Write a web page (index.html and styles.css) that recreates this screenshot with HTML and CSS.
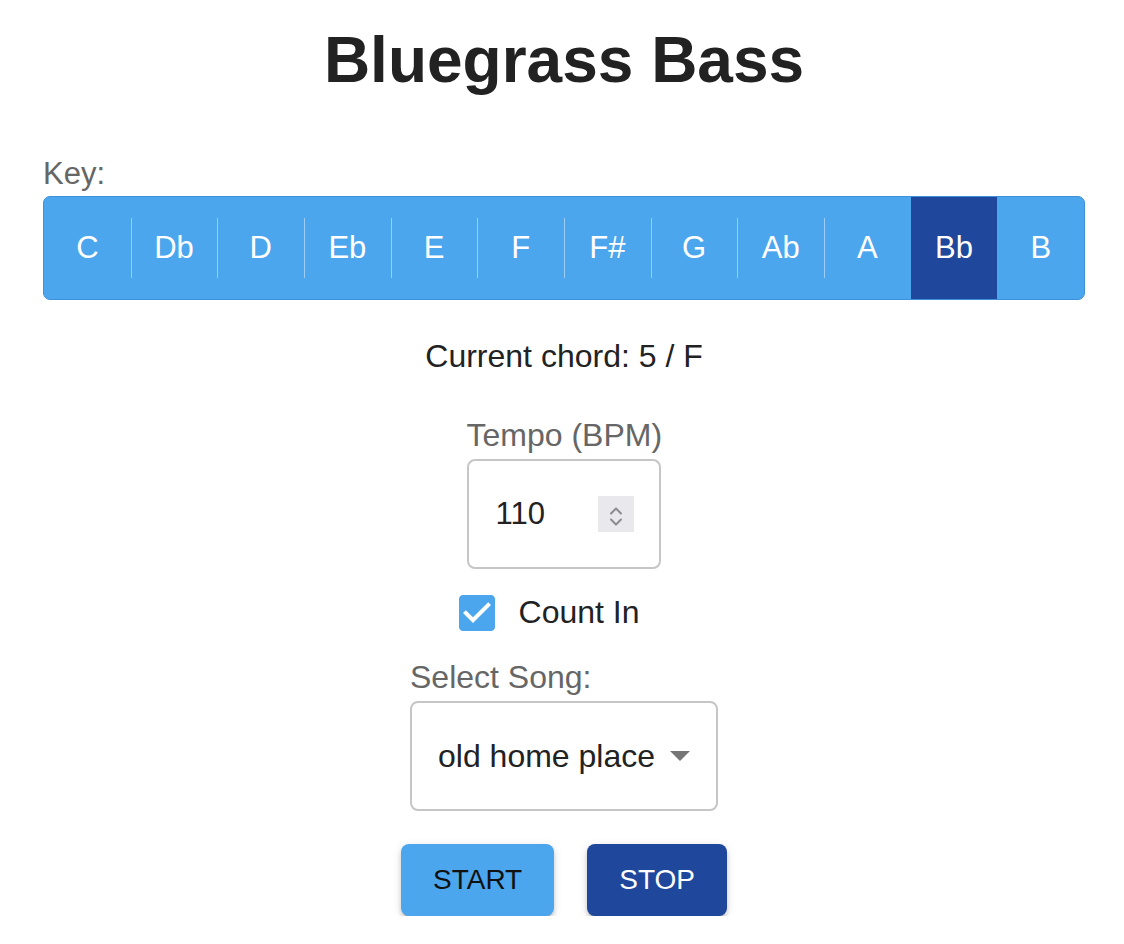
FILE: index.html
```html
<!DOCTYPE html>
<html lang="en">
<head>
<meta charset="utf-8">
<title>Bluegrass Bass</title>
<link rel="stylesheet" href="styles.css">
</head>
<body>
<main class="app">
  <h1 class="title">Bluegrass Bass</h1>

  <section class="key-section">
    <div class="field-label">Key:</div>
    <div class="key-group">
      <button class="key-btn">C</button>
      <button class="key-btn">Db</button>
      <button class="key-btn">D</button>
      <button class="key-btn">Eb</button>
      <button class="key-btn">E</button>
      <button class="key-btn">F</button>
      <button class="key-btn">F#</button>
      <button class="key-btn">G</button>
      <button class="key-btn">Ab</button>
      <button class="key-btn">A</button>
      <button class="key-btn selected">Bb</button>
      <button class="key-btn">B</button>
    </div>
  </section>

  <p class="chord">Current chord: 5 / F</p>

  <div class="tempo">
    <div class="field-label">Tempo (BPM)</div>
    <div class="num-box">
      <span class="num-value">110</span>
      <span class="spinner">
        <svg width="36" height="36" viewBox="0 0 36 36">
          <path d="M13 17.5 L18 12.5 L23 17.5" fill="none" stroke="#8b8b92" stroke-width="2" stroke-linecap="round" stroke-linejoin="round"/>
          <path d="M13 28 L18 33 L23 28" fill="none" stroke="#8b8b92" stroke-width="2" stroke-linecap="round" stroke-linejoin="round" transform="translate(0,-4.5)"/>
        </svg>
      </span>
    </div>
  </div>

  <label class="count-in">
    <span class="checkbox">
      <svg width="36" height="36" viewBox="3 3 18 18">
        <path fill="#4ba6ed" d="M19 3H5c-1.11 0-2 .9-2 2v14c0 1.1.89 2 2 2h14c1.11 0 2-.9 2-2V5c0-1.1-.89-2-2-2zm-9 14l-5-5 1.41-1.41L10 14.17l7.59-7.59L19 8l-9 9z"/>
      </svg>
    </span>
    <span class="count-text">Count In</span>
  </label>

  <div class="song">
    <div class="field-label">Select Song:</div>
    <div class="select-box">
      <span class="select-value">old home place</span>
      <svg class="select-arrow" width="20" height="10" viewBox="0 0 20 10">
        <path d="M0 0 L10 10 L20 0 Z" fill="#757575"/>
      </svg>
    </div>
  </div>

  <div class="actions">
    <button class="action start">START</button>
    <button class="action stop">STOP</button>
  </div>
</main>
</body>
</html>
```

FILE: styles.css
```css
* {
  box-sizing: border-box;
}

body {
  margin: 0;
  background: #ffffff;
  font-family: "Liberation Sans", Arial, Helvetica, sans-serif;
  color: #222222;
}

.app {
  display: flex;
  flex-direction: column;
  align-items: center;
  padding: 0 39px 0 43px;
}

.title {
  margin: 23px 0 0;
  font-size: 64px;
  line-height: 74px;
  font-weight: 700;
  color: #222222;
}

.field-label {
  font-size: 32px;
  line-height: 36px;
  color: #666666;
  white-space: nowrap;
}

.key-section .field-label {
  font-size: 31px;
}

.key-section {
  align-self: stretch;
  margin-top: 59px;
  display: flex;
  flex-direction: column;
  gap: 4px;
}

.key-group {
  display: flex;
  height: 104px;
  border: 1px solid #3d92da;
  border-radius: 7px;
  background: #4ba6ed;
  overflow: hidden;
}

.key-btn {
  position: relative;
  flex: 1 1 0;
  margin: -1px 0;
  border: 0;
  padding: 0;
  background: transparent;
  color: #ffffff;
  font-family: inherit;
  font-size: 31px;
}

.key-btn + .key-btn::before {
  content: "";
  position: absolute;
  left: 0;
  top: 22px;
  bottom: 22px;
  width: 1px;
  background: rgba(255, 255, 255, 0.45);
}

.key-btn.selected {
  background: #1f479c;
}

.key-btn.selected::before,
.key-btn.selected + .key-btn::before {
  display: none;
}

.chord {
  margin: 38px 0 0;
  font-size: 32px;
  line-height: 36px;
  color: #222222;
}

.tempo {
  margin-top: 43px;
  width: 195px;
  display: flex;
  flex-direction: column;
  gap: 6px;
}

.num-box {
  width: 194px;
  height: 110px;
  border: 2px solid #c6c6c6;
  border-radius: 8px;
  display: flex;
  align-items: center;
  justify-content: space-between;
  padding: 0 25px 0 27px;
}

.num-value {
  font-size: 31px;
  color: #222222;
}

.spinner {
  display: flex;
  width: 36px;
  height: 36px;
  background: #e8e8ed;
}

.count-in {
  margin-top: 25px;
  display: flex;
  align-items: center;
  gap: 24px;
  padding-right: 30px;
}

.checkbox {
  display: flex;
  width: 36px;
  height: 36px;
}

.count-text {
  font-size: 32px;
  color: #222222;
}

.song {
  margin-top: 28px;
  width: 308px;
  display: flex;
  flex-direction: column;
  gap: 6px;
}

.select-box {
  height: 110px;
  border: 2px solid #c6c6c6;
  border-radius: 8px;
  display: flex;
  align-items: center;
  justify-content: space-between;
  padding: 0 26px 0 26px;
}

.select-value {
  font-size: 32px;
  color: #222222;
  white-space: nowrap;
}

.select-arrow {
  display: block;
}

.actions {
  margin-top: 33px;
  display: flex;
  gap: 33px;
}

.action {
  height: 72px;
  padding: 0 32px;
  border: 0;
  border-radius: 8px;
  font-family: inherit;
  font-size: 28px;
  box-shadow: 0 6px 2px -4px rgba(0, 0, 0, 0.2), 0 4px 4px 0 rgba(0, 0, 0, 0.14), 0 2px 10px 0 rgba(0, 0, 0, 0.12);
}

.start {
  background: #4ba6ed;
  color: #111111;
}

.stop {
  background: #1f479c;
  color: #ffffff;
}
```
